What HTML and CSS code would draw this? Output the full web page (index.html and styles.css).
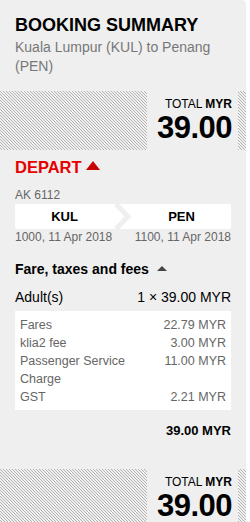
FILE: index.html
```html
<!DOCTYPE html>
<html lang="en">
<head>
  <meta charset="UTF-8" />
  <meta name="viewport" content="width=device-width, initial-scale=1.0"/>
  <title>Booking Summary</title>
  <link rel="stylesheet" href="styles.css">
</head>
<body>

  <aside class="summary">
    <div class="summary-head">
      <h1>BOOKING SUMMARY</h1>
      <p class="route">Kuala Lumpur (KUL) to Penang (PEN)</p>
    </div>

    <div class="total-band">
      <div class="total-box">
        <div class="total-label">TOTAL <strong>MYR</strong></div>
        <div class="total-amount">39.00</div>
      </div>
    </div>

    <section class="flight">
      <h2 class="depart">DEPART <span class="caret-red"></span></h2>
      <div class="flight-no">AK 6112</div>
      <div class="leg">
        <span class="station">KUL</span>
        <svg class="chevron" width="18" height="25" viewBox="0 0 18 25">
          <polyline points="2,0 14,12.5 2,25" fill="none" stroke="#efefef" stroke-width="5"/>
        </svg>
        <span class="station">PEN</span>
      </div>
      <div class="times">
        <span>1000, 11 Apr 2018</span>
        <span>1100, 11 Apr 2018</span>
      </div>
    </section>

    <section class="fees">
      <h3>Fare, taxes and fees <span class="caret-dark"></span></h3>
      <div class="row pax">
        <span>Adult(s)</span>
        <span>1 &times; 39.00 MYR</span>
      </div>
      <div class="breakdown">
        <div class="row"><span>Fares</span><span>22.79 MYR</span></div>
        <div class="row"><span>klia2 fee</span><span>3.00 MYR</span></div>
        <div class="row"><span class="wrap">Passenger Service Charge</span><span>11.00 MYR</span></div>
        <div class="row"><span>GST</span><span>2.21 MYR</span></div>
      </div>
      <div class="subtotal">39.00 MYR</div>
    </section>

    <div class="total-band">
      <div class="total-box">
        <div class="total-label">TOTAL <strong>MYR</strong></div>
        <div class="total-amount">39.00</div>
      </div>
    </div>
  </aside>

</body>
</html>
```

FILE: styles.css
```css
body {
  font-family: 'Liberation Sans', Arial, sans-serif;
  margin: 0;
  background-color: #fff;
  color: #000;
}

.summary {
  width: 246px;
  min-height: 522px;
  background-color: #efefef;
  border-top-right-radius: 4px;
  overflow: hidden;
}

.summary-head {
  padding: 14px 15px 0;
  height: 77px;
}

.summary-head h1 {
  margin: 0;
  font-size: 18px;
  font-weight: bold;
  line-height: 22px;
}

.route {
  margin: 2px 0 0;
  font-size: 14px;
  line-height: 19px;
  color: #777;
}

.total-band {
  display: flex;
  justify-content: flex-end;
  padding-right: 8px;
  background: repeating-linear-gradient(45deg, #f0f0f0 0 1.06px, #b4b4b4 1.06px 2.12px);
  background-color: #efefef;
}

.total-box {
  width: 85px;
  padding: 6px 6px 5px 0;
  background-color: #efefef;
  text-align: right;
}

.total-label {
  font-size: 12px;
  line-height: 14px;
}

.total-amount {
  font-size: 31px;
  font-weight: bold;
  line-height: 34px;
  letter-spacing: -0.5px;
}

.flight {
  padding: 6px 15px 0;
}

.depart {
  margin: 0;
  font-size: 16.5px;
  line-height: 22px;
  color: #e60000;
  font-weight: bold;
}

.caret-red {
  display: inline-block;
  width: 0;
  height: 0;
  border-left: 7px solid transparent;
  border-right: 7px solid transparent;
  border-bottom: 9px solid #c80000;
  vertical-align: 3px;
}

.flight-no {
  margin-top: 10px;
  font-size: 12px;
  line-height: 14px;
  color: #666;
}

.leg {
  display: flex;
  align-items: center;
  height: 25px;
  margin-top: 2px;
  background-color: #fff;
  border-radius: 2px;
}

.station {
  flex: 1;
  text-align: center;
  font-size: 13px;
  font-weight: bold;
}

.chevron {
  display: block;
  flex-shrink: 0;
}

.times {
  display: flex;
  justify-content: space-between;
  margin-top: 1px;
  font-size: 12px;
  line-height: 14px;
  color: #666;
}

.fees {
  padding: 16px 15px 0;
}

.fees h3 {
  margin: 0;
  font-size: 14px;
  line-height: 18px;
  font-weight: bold;
}

.caret-dark {
  display: inline-block;
  width: 0;
  height: 0;
  border-left: 5px solid transparent;
  border-right: 5px solid transparent;
  border-bottom: 5px solid #444;
  vertical-align: 3px;
  margin-left: 4px;
}

.row {
  display: flex;
  justify-content: space-between;
  align-items: flex-start;
}

.pax {
  margin-top: 10px;
  font-size: 14px;
  line-height: 18px;
}

.breakdown {
  margin-top: 5px;
  padding: 5px 5px 4px;
  background-color: #fff;
  font-size: 12.5px;
  line-height: 18px;
  color: #666;
}

.wrap {
  width: 110px;
}

.subtotal {
  margin-top: 13px;
  text-align: right;
  font-size: 13px;
  font-weight: bold;
  line-height: 16px;
  padding-bottom: 30px;
}
```
